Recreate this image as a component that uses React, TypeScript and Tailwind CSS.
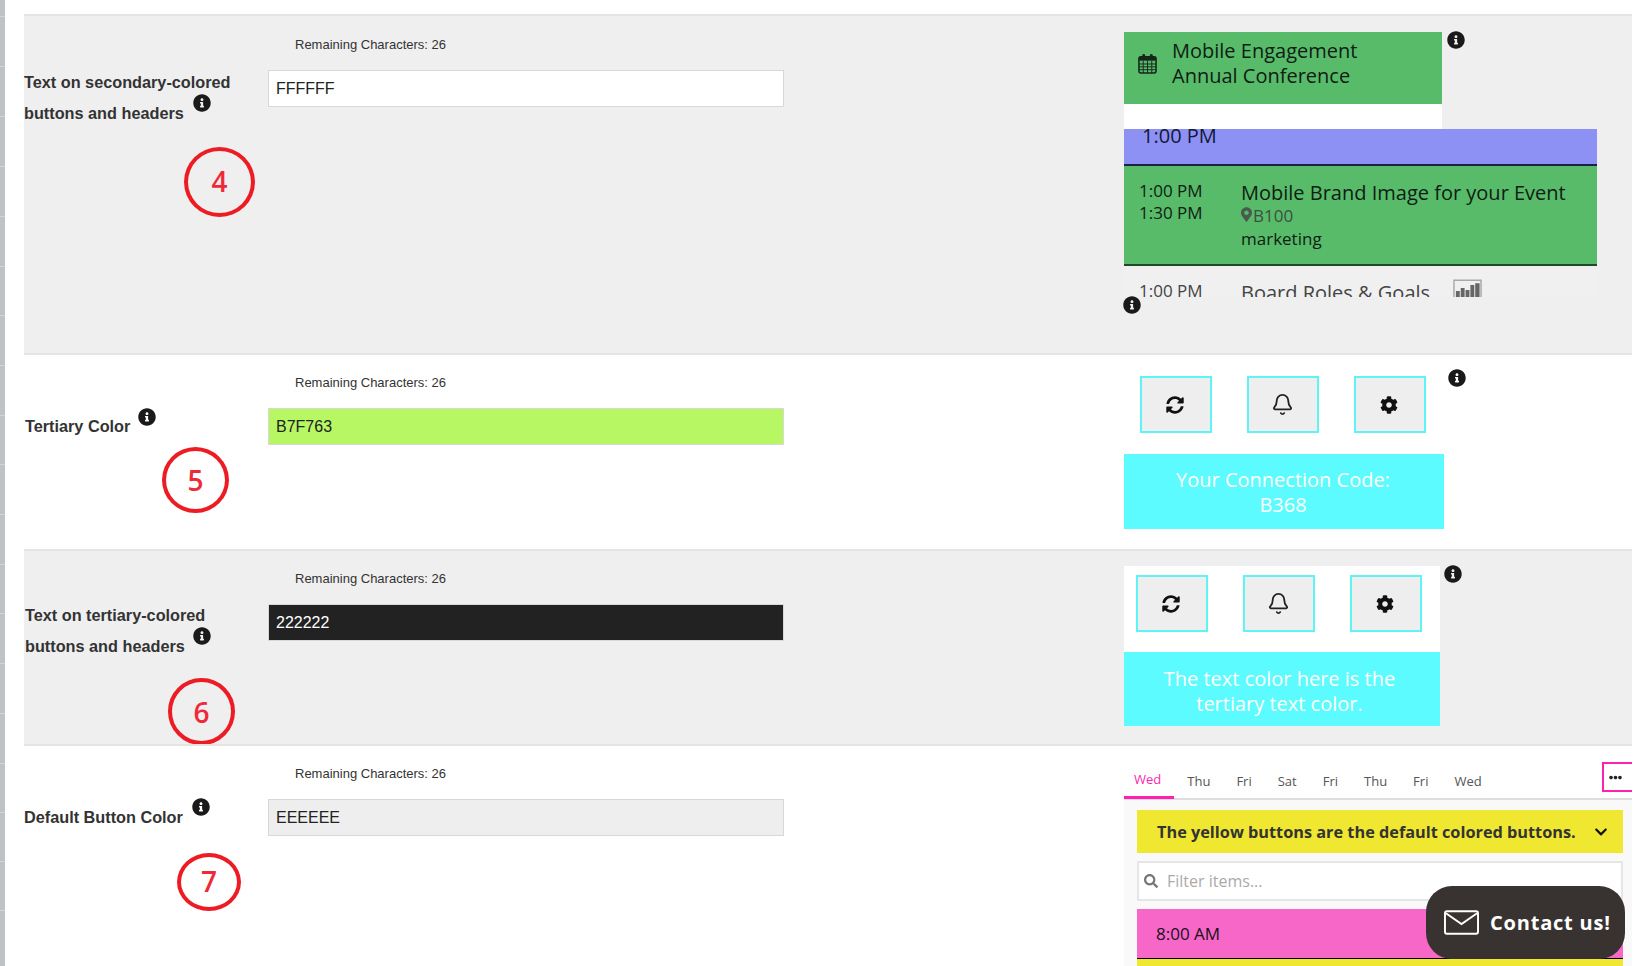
import React from "react";
import { FaInfoCircle, FaSyncAlt, FaCog, FaEllipsisH, FaChevronDown, FaSearch, FaMapMarkerAlt } from "react-icons/fa";
import { Bell } from "lucide-react";

function Info({ className = "" }: { className?: string }) {
  return <FaInfoCircle className={`text-[#1a1a1a] w-[18px] h-[18px] ${className}`} />;
}

function Circle({ n, className }: { n: string; className: string }) {
  return (
    <div className={`absolute flex items-center justify-center rounded-[50%] border-[4px] border-[#ed1c24] text-[#ee2a3a] text-[28px] font-semibold font-['Open_Sans',sans-serif] ${className}`}>
      {n}
    </div>
  );
}

function Field({ value, className, pad }: { value: string; className: string; pad: string }) {
  return (
    <div className={pad}>
      <div className="pl-[27px] text-[13px] leading-[16px] text-[#333]">Remaining Characters: 26</div>
      <input
        readOnly
        value={value}
        className={`mt-[17px] block w-[516px] h-[37px] border border-[#d8d8d8] px-[7px] text-[16px] outline-none ${className}`}
      />
    </div>
  );
}

function Buttons() {
  const cls = "w-[72px] h-[57px] bg-[#eeeeee] border-2 border-[#5ff3f6] flex items-center justify-center text-[#111]";
  return (
    <div className="flex">
      <div className={`${cls} pr-[2px]`}><FaSyncAlt className="w-[18px] h-[18px]" /></div>
      <div className={`${cls} ml-[35px] pr-[2px]`}><Bell className="w-[23px] h-[23px] text-[#222]" strokeWidth={1.9} /></div>
      <div className={`${cls} ml-[35px] pr-[2px]`}><FaCog className="w-[18px] h-[18px]" /></div>
    </div>
  );
}

function CalendarIcon() {
  return (
    <svg width="19" height="21" viewBox="0 0 20 22" className="text-[#16261a] flex-none">
      <rect x="1" y="4" width="18" height="17" rx="2" fill="none" stroke="currentColor" strokeWidth="1.6" />
      <rect x="1" y="4" width="18" height="4" fill="currentColor" />
      <rect x="4.5" y="1" width="3" height="5" rx="1.5" fill="currentColor" />
      <rect x="12.5" y="1" width="3" height="5" rx="1.5" fill="currentColor" />
      <path d="M1 11.5h18M1 14.5h18M1 17.5h18M5.5 8v13M10 8v13M14.5 8v13" stroke="currentColor" strokeWidth="1" />
    </svg>
  );
}

function ChartIcon() {
  return (
    <svg width="29" height="19" viewBox="0 0 30 19" className="ml-[23px] -mt-[1px] flex-none">
      <path d="M1 19V1h28v18" fill="none" stroke="#a8a8a8" strokeWidth="1.5" />
      <path d="M3 12h4v7H3zM8 9h4v10H8zM13 11h4v8h-4zM18 6h4v13h-4zM23 4h4.500v15H23z" fill="#666" />
    </svg>
  );
}

const ticks = [17, 50, 50, 50, 50, 50, 49, 50, 50, 49, 50, 50, 49, 50, 50, 50, 49, 49, 49];

export default function App() {
  return (
    <div className="relative flex h-[966px] w-full overflow-hidden bg-white font-['Liberation_Sans',Arial,sans-serif] text-[#222]">
      <div className="w-[5px] flex-none bg-[#bfc2c5] h-full flex flex-col">
        {ticks.map((h, i) => (
          <div key={i} style={{ height: h }} className="border-b border-[#d2d5d7]" />
        ))}
      </div>
      <div className="flex-1 ml-[19px] mr-[11px] pt-[14px] min-w-0">
        {/* Row 4 */}
        <section className="relative grid grid-cols-[244px_516px_1fr] h-[339px] bg-[#efefef] border-t-2 border-[#e4e4e4]">
          <div className="pt-[51px] text-[16.25px] leading-[31px] font-bold text-[#333] whitespace-nowrap">
            Text on secondary-colored<br />
            buttons and headers<Info className="inline-block ml-[9px] relative -top-[12px]" />
          </div>
          <Field value="FFFFFF" className="bg-white text-[#222]" pad="pt-[21px]" />
          <div className="pl-[340px] pt-[16px] font-['Open_Sans',sans-serif] text-[#111c14]">
            <div className="w-[318px] h-[72px] bg-[#57bb6a] flex items-center pl-[14px] pb-[10px]">
              <CalendarIcon />
              <div className="ml-[15px] text-[20px] leading-[25px]">Mobile Engagement<br />Annual Conference</div>
            </div>
            <div className="w-[318px] h-[25px] bg-white" />
            <div className="w-[473px] h-[37px] bg-[#8d91f3] border-b-2 border-[#1c2340] overflow-hidden pl-[18px] text-[20px] leading-[13px] text-[#14173a]">1:00 PM</div>
            <div className="w-[473px] h-[100px] bg-[#57bb6a] border-b-2 border-[#1f4a2a] flex pl-[15px] pt-[14px]">
              <div className="w-[102px] text-[17px] leading-[22px]">1:00 PM<br />1:30 PM</div>
              <div>
                <div className="text-[20px] leading-[25px]">Mobile Brand Image for your Event</div>
                <div className="flex items-center text-[17px] leading-[22px] text-[#3d4f41]"><FaMapMarkerAlt className="w-[11px] h-[15px] mr-[1px] text-[#4a5a4d] -mt-[3px]" />B100</div>
                <div className="text-[17px] leading-[24px]">marketing</div>
              </div>
            </div>
            <div className="w-[473px] h-[31px] bg-[#f0f0f0] overflow-hidden flex pl-[15px] pt-[14px] text-[#444]">
              <div className="w-[102px] text-[17px] leading-[22px]">1:00 PM</div>
              <div className="text-[20px] leading-[24px] pt-[1px] whitespace-nowrap">Board Roles &amp; Goals</div>
              <ChartIcon />
            </div>
          </div>
          <Info className="absolute left-[1423px] top-[15px]" />
          <Info className="absolute left-[1099px] top-[280px]" />
          <Circle n="4" className="left-[160px] top-[131px] w-[71px] h-[70px] pb-[2px]" />
        </section>

        {/* Row 5 */}
        <section className="relative grid grid-cols-[244px_516px_1fr] h-[196px] bg-white border-t-2 border-[#e4e4e4]">
          <div className="pt-[56px] pl-[1px] text-[16.25px] leading-[31px] font-bold text-[#333] whitespace-nowrap">
            Tertiary Color<Info className="inline-block ml-[8px] relative -top-[11px]" />
          </div>
          <Field value="B7F763" className="bg-[#b7f763] text-[#222]" pad="pt-[20px]" />
          <div className="pl-[340px] pt-[21px] font-['Open_Sans',sans-serif]">
            <div className="pl-[16px]"><Buttons /></div>
            <div className="mt-[21px] w-[320px] h-[75px] bg-[#5cfbff] text-white text-[20px] leading-[25px] text-center pt-[13px] pr-[2px]">Your Connection Code:<br />B368</div>
          </div>
          <Info className="absolute left-[1424px] top-[14px]" />
          <Circle n="5" className="left-[138px] top-[92px] w-[67px] h-[66px]" />
        </section>

        {/* Row 6 */}
        <section className="relative grid grid-cols-[244px_516px_1fr] h-[195px] bg-[#efefef] border-t-2 border-[#e4e4e4]">
          <div className="pt-[49px] pl-[1px] text-[16.25px] leading-[31px] font-bold text-[#333] whitespace-nowrap">
            Text on tertiary-colored<br />
            buttons and headers<Info className="inline-block ml-[8px] relative -top-[12px]" />
          </div>
          <Field value="222222" className="bg-[#222222] text-white" pad="pt-[20px]" />
          <div className="pl-[340px] pt-[15px] font-['Open_Sans',sans-serif]">
            <div className="w-[316px] h-[86px] bg-white pl-[12px] pt-[9px]"><Buttons /></div>
            <div className="w-[316px] h-[74px] bg-[#5cfbff] text-white text-[20px] leading-[25px] text-center pt-[14px] pr-[5px]">The text color here is the<br />tertiary text color.</div>
          </div>
          <Info className="absolute left-[1420px] top-[14px]" />
          <Circle n="6" className="left-[144px] top-[127px] w-[67px] h-[67px]" />
        </section>

        {/* Row 7 */}
        <section className="relative grid grid-cols-[244px_516px_1fr] h-[222px] bg-white border-t-2 border-[#e4e4e4]">
          <div className="pt-[56px] text-[16.25px] leading-[31px] font-bold text-[#333] whitespace-nowrap">
            Default Button Color<Info className="inline-block ml-[9px] relative -top-[12px]" />
          </div>
          <Field value="EEEEEE" className="bg-[#eeeeee] text-[#222]" pad="pt-[20px]" />
          <div className="ml-[340px] pt-[16px] font-['Open_Sans',sans-serif] overflow-hidden">
            <div className="h-[38px] border-b-2 border-[#dddddd] flex items-end text-[13px] text-[#555] relative">
              <div className="pl-[10px] pr-[13px] h-[29px] border-b-[3px] border-[#ff1fb0] text-[#ff1fb0] -mb-[1px] font-medium">Wed</div>
              {["Thu", "Fri", "Sat", "Fri", "Thu", "Fri", "Wed"].map((t, i) => (
                <div key={i} className="px-[13px] h-[26px]">{t}</div>
              ))}
              <div className="absolute left-[478px] top-0 w-[40px] h-[30px] border-2 border-[#ff1fb0] bg-white flex items-center pl-[5px] text-[#222]">
                <FaEllipsisH className="w-[13px] h-[13px]" />
              </div>
            </div>
            <div className="bg-[#f9f9f9] pl-[13px] pr-[9px] pt-[10px] h-[200px]">
              <div className="h-[43px] bg-[#f0e830] flex items-center pl-[20px] font-bold text-[16.3px] text-[#333] whitespace-nowrap">
                <span className="pt-[2px]">The yellow buttons are the default colored buttons.</span>
                <FaChevronDown className="w-[14px] h-[14px] ml-[18px] text-[#111]" />
              </div>
              <div className="mt-[8px] h-[40px] border-2 border-[#e6e6e6] bg-white flex items-center pl-[5px] text-[16px] text-[#aaa]">
                <FaSearch className="w-[14px] h-[14px] text-[#777] mr-[9px]" />Filter items...
              </div>
              <div className="mt-[8px] h-[50px] bg-[#f667c8] border-b border-black flex items-center pl-[19px] text-[17px] text-[#1a1020]">8:00 AM</div>
              <div className="h-[40px] bg-[#f0e830]" />
            </div>
          </div>
          <Circle n="7" className="left-[153px] top-[107px] w-[64px] h-[58px] pb-[2px]" />
        </section>
      </div>

      <div className="absolute left-[1426px] top-[886px] w-[199px] h-[73px] bg-[#383330] rounded-[26px] flex items-center pl-[18px] font-['Open_Sans',sans-serif] text-white font-bold text-[20px] tracking-[0.8px] whitespace-nowrap">
        <svg width="35" height="25" viewBox="0 0 36 25" className="mr-[11px] flex-none">
          <rect x="1" y="1" width="34" height="23" rx="2" fill="none" stroke="white" strokeWidth="2" />
          <path d="M2 3l16 11L34 3" fill="none" stroke="white" strokeWidth="2" />
        </svg>
        Contact us!
      </div>
    </div>
  );
}
